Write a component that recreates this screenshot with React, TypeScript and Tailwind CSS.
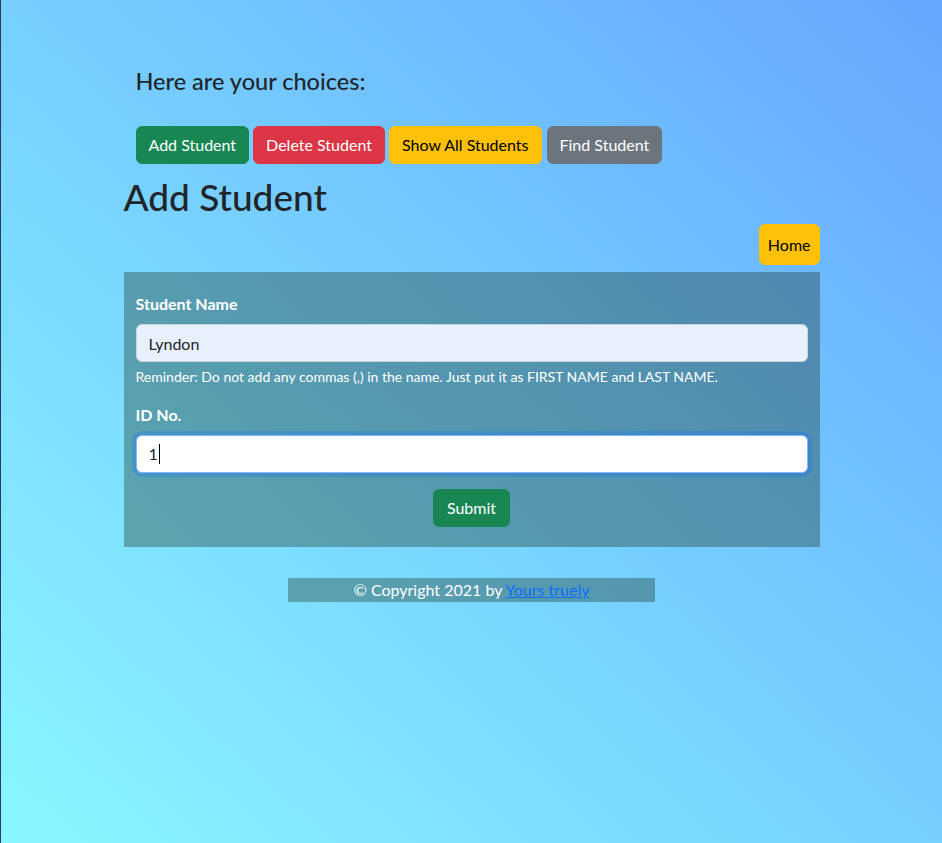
export default function App() {
  return (
    <div className="min-h-screen border-l border-[#2d3c5e] bg-gradient-to-tr from-[#89f7fe] to-[#66a6ff] text-[#212529] font-['Lato','Liberation_Sans',sans-serif]">
      <div className="mx-auto w-[696px] pt-[67px]">
        {/* Choices */}
        <div className="px-3">
          <h4 className="text-[23.5px] leading-[28px] font-medium">Here are your choices:</h4>
          <div className="mt-[31px] flex gap-1">
            <button className="rounded-md border border-[#198754] bg-[#198754] px-3 py-1.5 text-base leading-6 text-white">Add Student</button>
            <button className="rounded-md border border-[#dc3545] bg-[#dc3545] px-3 py-1.5 text-base leading-6 text-white">Delete Student</button>
            <button className="rounded-md border border-[#ffc107] bg-[#ffc107] px-3 py-1.5 text-base leading-6 text-black">Show All Students</button>
            <button className="ml-[1px] rounded-md border border-[#6c757d] bg-[#6c757d] px-3 py-1.5 text-base leading-6 text-white">Find Student</button>
          </div>
        </div>

        <h1 className="mt-[11px] text-[37px] leading-[43px] font-medium">Add Student</h1>

        <div className="mt-[6px] flex justify-end">
          <button className="rounded-md border border-[#ffc107] bg-[#ffc107] px-[8px] py-[7.5px] text-base leading-6 text-black">Home</button>
        </div>

        {/* Form panel */}
        <form className="mt-[7px] bg-[rgba(20,45,20,0.34)] px-3 py-5">
          <div className="mb-4">
            <label className="mb-2 block text-base leading-6 font-bold text-white">Student Name</label>
            <input
              defaultValue="Lyndon"
              className="block h-[38px] w-full rounded-md border border-[#ced4da] bg-[#e8f0fe] px-3 text-base text-[#212529] outline-none"
            />
            <div className="mt-1 text-sm leading-[21px] text-white">
              Reminder: Do not add any commas (,) in the name. Just put it as FIRST NAME and LAST NAME.
            </div>
          </div>
          <div className="mb-4">
            <label className="mb-2 block text-base leading-6 font-bold text-white">ID No.</label>
            <div className="flex h-[38px] w-full items-center rounded-md border border-[#86b7fe] bg-white px-3 text-base text-[#212529] shadow-[0_0_0_4px_rgba(13,110,253,0.25)]">
              <span>1</span>
              <span className="ml-[1px] h-[20px] w-px bg-black" />
            </div>
          </div>
          <div className="flex justify-center">
            <button type="button" className="rounded-md border border-[#198754] bg-[#198754] px-[13px] py-1.5 text-base leading-6 text-white">Submit</button>
          </div>
        </form>

        {/* Footer */}
        <div className="mx-auto mt-[31px] w-[367px] bg-[rgba(20,45,20,0.34)] text-center text-base leading-6 text-white">
          © Copyright 2021 by <a href="#" className="text-[#0d6efd] underline">Yours truely</a>
        </div>
      </div>
    </div>
  );
}
